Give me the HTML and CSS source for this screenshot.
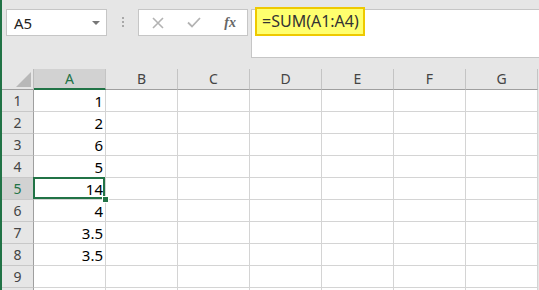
FILE: index.html
```html
<!DOCTYPE html>
<html lang="en">
<head>
    <meta charset="UTF-8">
    <title>Sheet</title>
    <link rel="stylesheet" href="styles.css">
</head>
<body>
    <div class="sheet">
        <div class="bar">
            <div class="name-box">
                <span>A5</span>
                <span class="caret"></span>
            </div>
            <div class="dots"><i></i><i></i><i></i></div>
            <div class="fx-buttons">
                <svg width="12" height="12" viewBox="0 0 12 12"><path d="M1 1 L11 11 M11 1 L1 11" stroke="#b3b3b3" stroke-width="1.6" fill="none"/></svg>
                <svg width="14" height="11" viewBox="0 0 14 11"><path d="M1 5.5 L5 9.5 L13 1" stroke="#b3b3b3" stroke-width="1.8" fill="none"/></svg>
                <span class="fx">fx</span>
            </div>
            <div class="formula">
                <span class="mark">=SUM(A1:A4)</span>
            </div>
        </div>
        <div class="grid">
            <div class="corner"><svg width="15" height="15" viewBox="0 0 15 15"><path d="M15 0 L15 15 L0 15 Z" fill="#b8b8b8"/></svg></div>
            <div class="col on">A</div>
            <div class="col">B</div>
            <div class="col">C</div>
            <div class="col">D</div>
            <div class="col">E</div>
            <div class="col">F</div>
            <div class="col">G</div>
        </div>
    </div>
    <script>
        // build rows (the 10th row only peeks in at the bottom edge)
        const values = ['1', '2', '6', '5', '14', '4', '3.5', '3.5', '', ''];
        const grid = document.querySelector('.grid');
        values.forEach(function(v, i) {
            const head = document.createElement('div');
            head.className = 'row' + (i === 4 ? ' on' : '');
            head.textContent = i < 9 ? i + 1 : '';
            grid.appendChild(head);
            for (let c = 0; c < 7; c++) {
                const cell = document.createElement('div');
                cell.className = 'cell';
                if (c === 0) {
                    cell.textContent = v;
                    if (i === 4) cell.className += ' active';
                }
                grid.appendChild(cell);
            }
        });
    </script>
</body>
</html>
```

FILE: styles.css
```css
body {
    margin: 0;
    background-color: #e6e6e6;
    font-family: "Noto Sans", "Open Sans", sans-serif;
    color: #222;
}
.sheet {
    height: 290px;
    overflow: hidden;
    border-left: 2px solid #217346;
}
.bar {
    display: flex;
    align-items: flex-start;
    height: 69px;
    padding: 9px 0 0 4px;
    box-sizing: border-box;
}
.name-box {
    width: 101px;
    height: 27px;
    box-sizing: border-box;
    background-color: #fff;
    border: 1px solid #c6c6c6;
    display: flex;
    align-items: center;
    justify-content: space-between;
    padding: 0 6px 0 7px;
    font-size: 15px;
}
.caret {
    width: 0;
    height: 0;
    border-left: 4px solid transparent;
    border-right: 4px solid transparent;
    border-top: 4px solid #777;
}
.dots {
    display: flex;
    flex-direction: column;
    gap: 2px;
    margin: 8px 0 0 15px;
}
.dots i {
    display: block;
    width: 2px;
    height: 2px;
    background-color: #a8a8a8;
}
.fx-buttons {
    margin-left: 14px;
    width: 110px;
    height: 27px;
    box-sizing: border-box;
    background-color: #fff;
    border: 1px solid #c6c6c6;
    display: flex;
    align-items: center;
    justify-content: space-between;
    padding: 0 11px 0 13px;
}
.fx {
    font-family: "Liberation Serif", serif;
    font-style: italic;
    font-weight: bold;
    font-size: 14px;
    color: #666;
}
.formula {
    margin-left: 3px;
    flex: 1;
    height: 49px;
    box-sizing: border-box;
    background-color: #fff;
    border: 1px solid #c6c6c6;
    border-right: none;
    padding-left: 3px;
}
.mark {
    display: inline-block;
    margin-top: -3px;
    height: 29px;
    line-height: 25px;
    box-sizing: border-box;
    padding: 0 4px 0 5px;
    background-color: #ffff6e;
    border: 2px solid #eec900;
    font-size: 16px;
    color: #333;
}
.grid {
    display: grid;
    grid-template-columns: 32px repeat(7, 72px);
    grid-template-rows: 21px;
    grid-auto-rows: 22px;
    font-size: 14px;
}
.corner,
.col,
.row,
.cell {
    box-sizing: border-box;
}
.corner {
    border-right: 1px solid #bcbcbc;
    border-bottom: 1px solid #9f9f9f;
    display: flex;
    align-items: flex-end;
    justify-content: flex-end;
    padding: 0 2px 2px 0;
}
.col {
    border-right: 1px solid #c4c4c4;
    border-bottom: 1px solid #9f9f9f;
    text-align: center;
    line-height: 20px;
    color: #444;
}
.col.on {
    background-color: #d2d2d2;
    color: #217346;
    border-bottom: 2px solid #217346;
}
.row {
    border-right: 1px solid #9f9f9f;
    border-bottom: 1px solid #c8c8c8;
    text-align: center;
    line-height: 21px;
    color: #444;
}
.row.on {
    background-color: #d2d2d2;
    color: #217346;
}
.cell {
    background-color: #fff;
    border-right: 1px solid #d4d4d4;
    border-bottom: 1px solid #d4d4d4;
    text-align: right;
    padding-right: 2px;
    line-height: 22px;
    font-size: 15px;
    color: #000;
}
.cell.active {
    position: relative;
}
.cell.active::after {
    content: '';
    position: absolute;
    top: -1px;
    left: -1px;
    right: 0;
    bottom: 0;
    border: 2px solid #217346;
}
.cell.active::before {
    content: '';
    position: absolute;
    right: -4px;
    bottom: -4px;
    width: 5px;
    height: 5px;
    background-color: #217346;
    border: 1px solid #fff;
    z-index: 1;
}
```
